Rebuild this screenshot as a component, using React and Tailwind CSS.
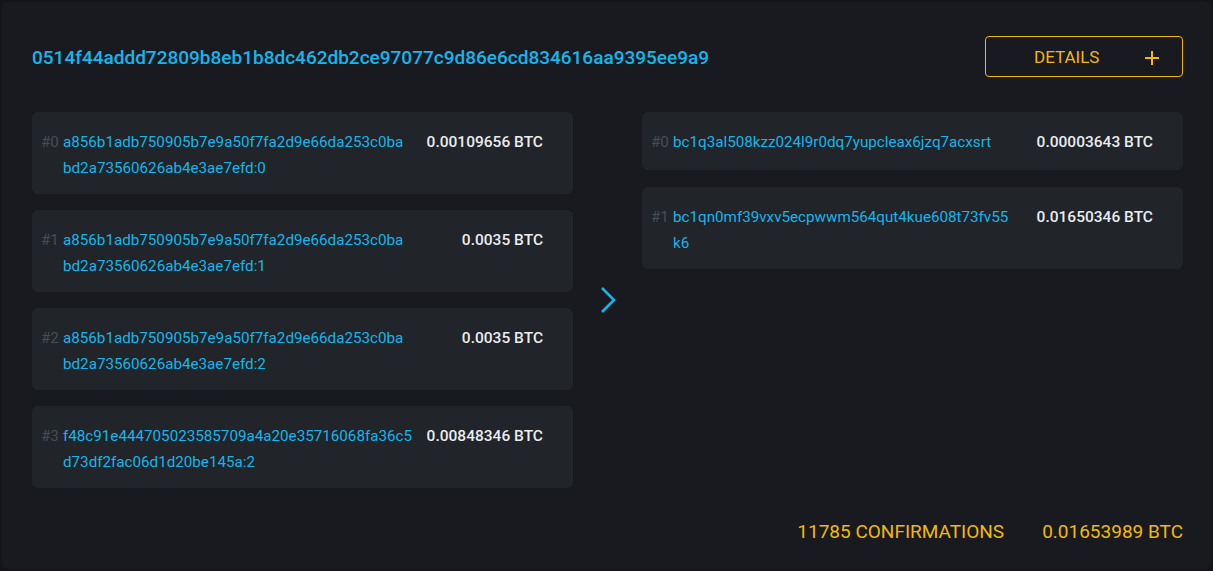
import React from "react";

const inputs = [
  {
    idx: "#0",
    lines: ["a856b1adb750905b7e9a50f7fa2d9e66da253c0ba", "bd2a73560626ab4e3ae7efd:0"],
    amount: "0.00109656 BTC",
  },
  {
    idx: "#1",
    lines: ["a856b1adb750905b7e9a50f7fa2d9e66da253c0ba", "bd2a73560626ab4e3ae7efd:1"],
    amount: "0.0035 BTC",
  },
  {
    idx: "#2",
    lines: ["a856b1adb750905b7e9a50f7fa2d9e66da253c0ba", "bd2a73560626ab4e3ae7efd:2"],
    amount: "0.0035 BTC",
  },
  {
    idx: "#3",
    lines: ["f48c91e444705023585709a4a20e35716068fa36c5", "d73df2fac06d1d20be145a:2"],
    amount: "0.00848346 BTC",
  },
];

const outputs = [
  {
    idx: "#0",
    lines: ["bc1q3al508kzz024l9r0dq7yupcleax6jzq7acxsrt"],
    amount: "0.00003643 BTC",
  },
  {
    idx: "#1",
    lines: ["bc1qn0mf39vxv5ecpwwm564qut4kue608t73fv55", "k6"],
    amount: "0.01650346 BTC",
  },
];

function Row({ row }) {
  return (
    <div className="flex min-h-[58px] rounded-md bg-[#212429] pl-[9px] pr-[30px] pt-[17px] pb-[13px] text-[15.2px] leading-[26px]">
      <span className="w-[22px] shrink-0 text-[#474d57]">{row.idx}</span>
      <div className="min-w-0 flex-1 whitespace-nowrap text-[#17b5eb]">
        {row.lines.map((l, i) => (
          <div key={i}>{l}</div>
        ))}
      </div>
      <span className="w-[118px] shrink-0 text-right text-[15.5px] font-medium text-[#eaecef]">{row.amount}</span>
    </div>
  );
}

export default function App() {
  return (
    <div
      className="h-[571px] w-[1213px] bg-[#131519] p-[2px]"
      style={{ fontFamily: "Roboto, 'Liberation Sans', sans-serif" }}
    >
      <div className="h-full rounded-md bg-[#181a1f] pl-[30px] pr-[28px] pt-[34px]">
        <div className="flex h-[41px] items-center justify-between">
          <h1 className="pt-[4px] text-[19px] font-medium text-[#17b5eb]">
            0514f44addd72809b8eb1b8dc462db2ce97077c9d86e6cd834616aa9395ee9a9
          </h1>
          <button className="flex h-[41px] w-[198px] items-center justify-between rounded-sm border border-[#f0b90b] pl-[48px] pr-[22px] pt-[2px] text-[17px] text-[#f0b90b]">
            <span>DETAILS</span>
            <svg width="16" height="16" viewBox="0 0 16 16" fill="none" stroke="#f0b90b" strokeWidth="2">
              <path d="M8 1v14M1 8h14" />
            </svg>
          </button>
        </div>

        <div className="mt-[35px] flex items-center">
          <div className="flex w-[541px] flex-col gap-4">
            {inputs.map((r) => (
              <Row key={r.idx} row={r} />
            ))}
          </div>
          <div className="flex flex-1 justify-center">
            <svg width="20" height="28" viewBox="0 0 20 28" fill="none" stroke="#17b5eb" strokeWidth="2.6">
              <path d="M4 2l12 12L4 26" />
            </svg>
          </div>
          <div className="flex w-[541px] flex-col gap-[17px] self-start">
            {outputs.map((r) => (
              <Row key={r.idx} row={r} />
            ))}
          </div>
        </div>

        <div className="mt-[31px] flex justify-end gap-[38px] text-[19px] leading-[26px] text-[#f0b90b]">
          <span>11785 CONFIRMATIONS</span>
          <span>0.01653989 BTC</span>
        </div>
      </div>
    </div>
  );
}
